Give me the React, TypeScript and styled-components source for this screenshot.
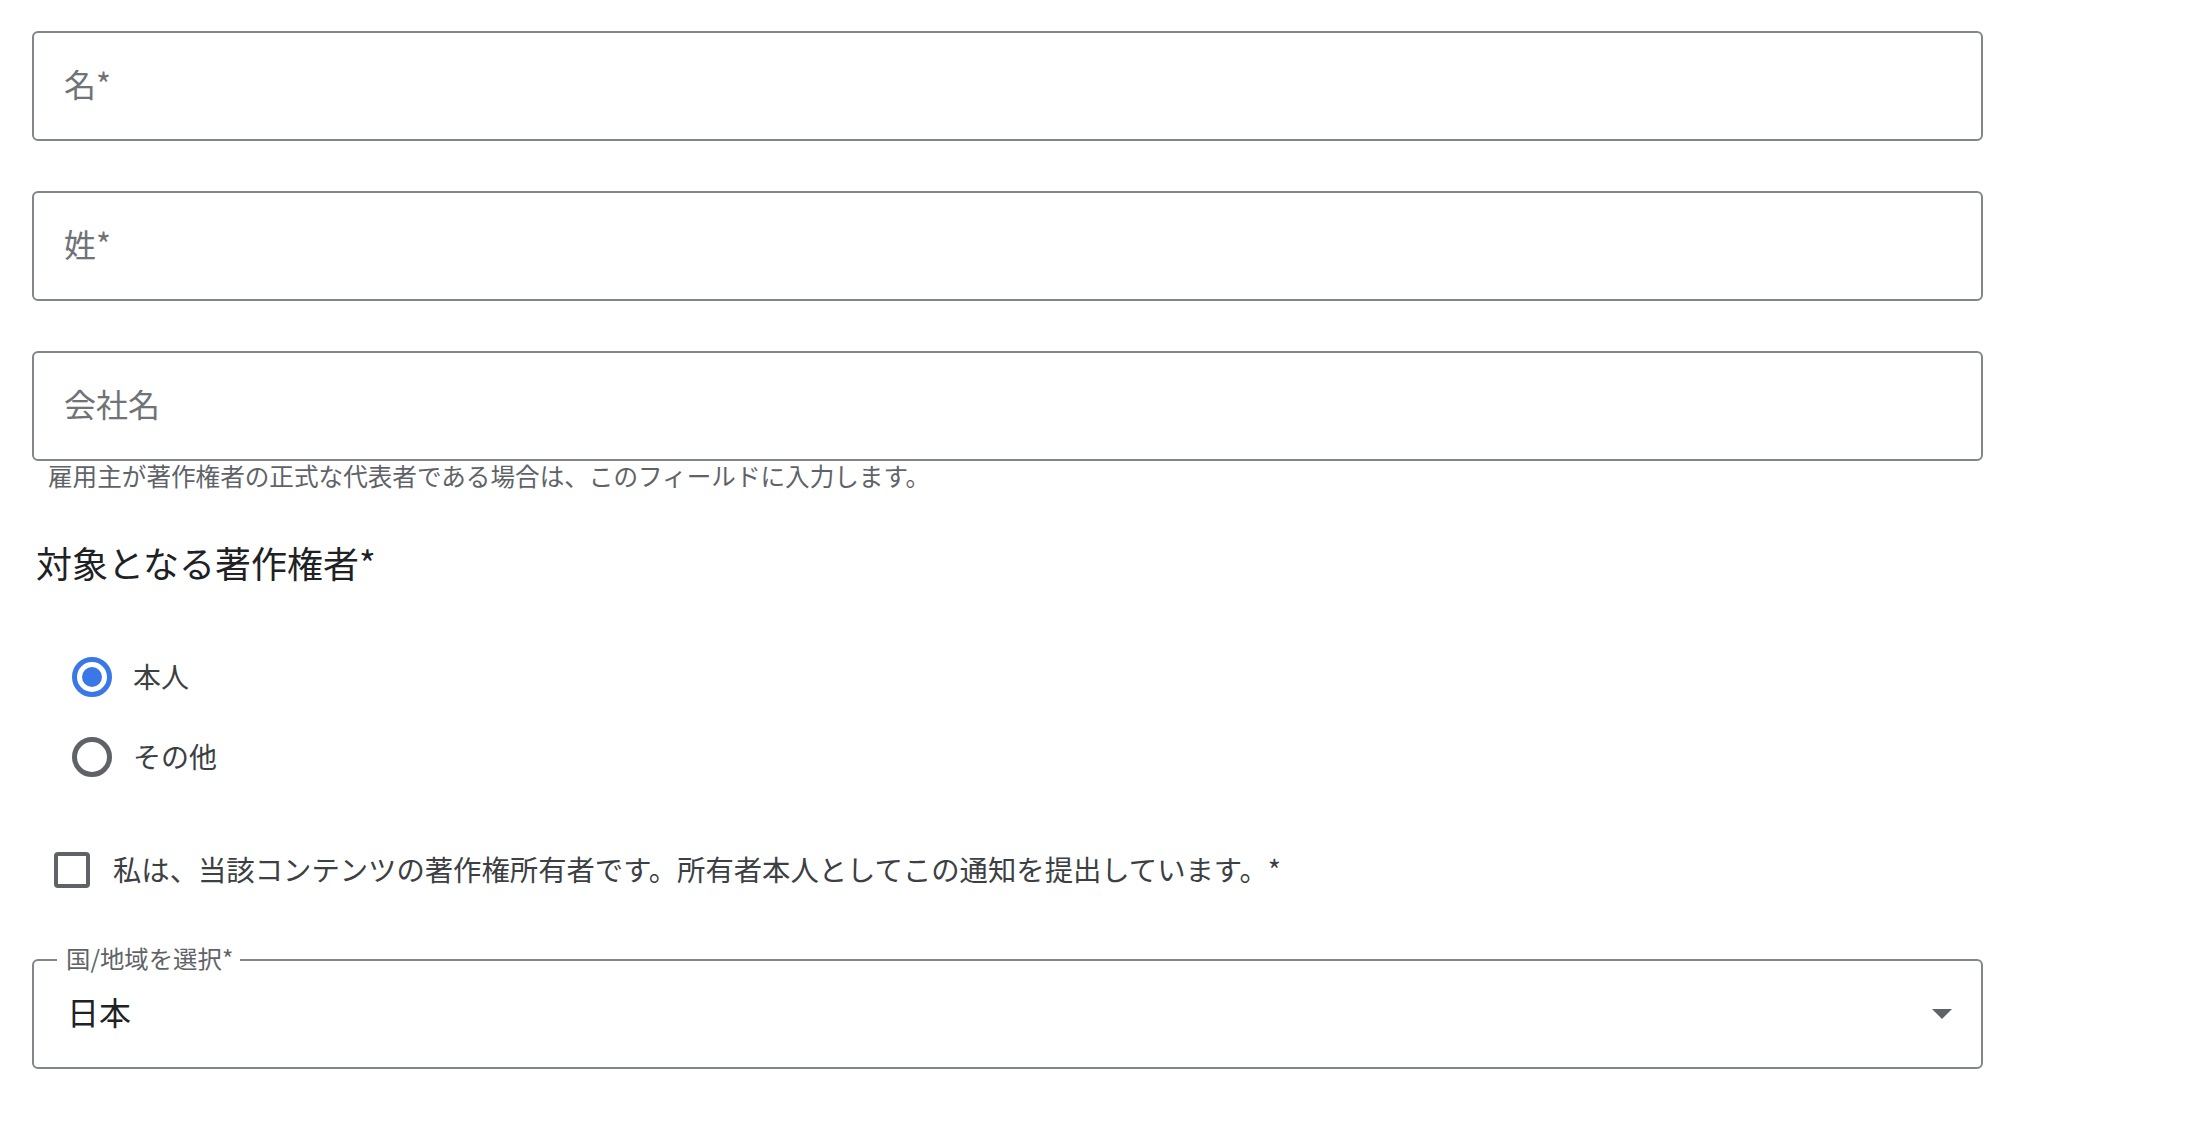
import React from "react";
import styled, { createGlobalStyle } from "styled-components";

const GlobalStyle = createGlobalStyle`
  html, body {
    margin: 0;
    padding: 0;
    background: #ffffff;
  }
  body {
    font-family: "Noto Sans CJK JP", "Noto Sans", sans-serif;
    color: #202124;
  }
`;

const Form = styled.form`
  width: 1951px;
  padding: 31px 0 40px 32px;
  display: flex;
  flex-direction: column;
`;

const TextField = styled.input<{ gap?: number }>`
  box-sizing: border-box;
  width: 100%;
  height: 110px;
  margin: 0 0 ${(p) => (p.gap !== undefined ? p.gap : 50)}px 0;
  padding: 0 30px 6px;
  border: 2px solid #80868b;
  border-radius: 6px;
  background: #fff;
  font-family: inherit;
  font-size: 32px;
  color: #202124;
  outline: none;
  &::placeholder {
    color: #6f7377;
  }
`;

const Helper = styled.div`
  margin-top: -2px;
  padding-left: 16px;
  font-size: 24.6px;
  line-height: 32px;
  color: #5f6368;
`;

const Heading = styled.h2`
  margin: 47px 0 0 4px;
  font-size: 36px;
  line-height: 48px;
  font-weight: 400;
  color: #202124;
`;

const RadioGroup = styled.div`
  margin-top: 51px;
  display: flex;
  flex-direction: column;
`;

const RadioRow = styled.label`
  height: 80px;
  display: flex;
  align-items: center;
  padding-left: 40px;
  gap: 21px;
  font-size: 28px;
  color: #3c4043;
  cursor: pointer;
`;

const RowText = styled.span`
  padding-bottom: 3px;
`;

const RadioCircle = styled.span<{ checked?: boolean }>`
  box-sizing: border-box;
  width: 40px;
  height: 40px;
  border-radius: 50%;
  border: 5px solid ${(p) => (p.checked ? "#3b78e7" : "#5f6368")};
  display: flex;
  align-items: center;
  justify-content: center;
  &::after {
    content: "";
    width: 20px;
    height: 20px;
    border-radius: 50%;
    background: ${(p) => (p.checked ? "#3b78e7" : "transparent")};
  }
`;

const CheckRow = styled.label`
  margin-top: 45px;
  height: 56px;
  display: flex;
  align-items: center;
  padding-left: 22px;
  gap: 23px;
  font-size: 28.35px;
  color: #3c4043;
  cursor: pointer;
`;

const CheckBox = styled.span`
  box-sizing: border-box;
  width: 36px;
  height: 36px;
  border: 4px solid #5f6368;
  border-radius: 4px;
  flex-shrink: 0;
`;

const SelectBox = styled.div`
  position: relative;
  box-sizing: border-box;
  margin-top: 61px;
  height: 110px;
  border: 2px solid #80868b;
  border-radius: 6px;
  display: flex;
  align-items: center;
  justify-content: space-between;
  padding: 0 29px 3px 33px;
  font-size: 32px;
  color: #202124;
`;

const FloatingLabel = styled.span`
  position: absolute;
  top: -19px;
  left: 23px;
  padding: 0 7px 0 9px;
  background: #fff;
  font-size: 24.4px;
  line-height: 32px;
  color: #5f6368;
`;

const ArrowIcon = styled.svg`
  margin-top: 3px;
`;

const Arrow = () => (
  <ArrowIcon width="20" height="10" viewBox="0 0 20 10">
    <polygon points="0,0 20,0 10,10" fill="#5f6368" />
  </ArrowIcon>
);

const options = [
  { id: "self", desc: "本人", checked: true },
  { id: "other", desc: "その他", checked: false },
];

export default function App() {
  return (
    <>
      <GlobalStyle />
      <Form onSubmit={(e) => e.preventDefault()}>
        <TextField placeholder="名*" />
        <TextField placeholder="姓*" />
        <TextField placeholder="会社名" gap={0} />
        <Helper>雇用主が著作権者の正式な代表者である場合は、このフィールドに入力します。</Helper>
        <Heading>対象となる著作権者*</Heading>
        <RadioGroup>
          {options.map((item) => (
            <RadioRow key={item.id}>
              <RadioCircle checked={item.checked} />
              <RowText>{item.desc}</RowText>
            </RadioRow>
          ))}
        </RadioGroup>
        <CheckRow>
          <CheckBox />
          <RowText>私は、当該コンテンツの著作権所有者です。所有者本人としてこの通知を提出しています。*</RowText>
        </CheckRow>
        <SelectBox>
          <FloatingLabel>国/地域を選択*</FloatingLabel>
          <RowText>日本</RowText>
          <Arrow />
        </SelectBox>
      </Form>
    </>
  );
}
